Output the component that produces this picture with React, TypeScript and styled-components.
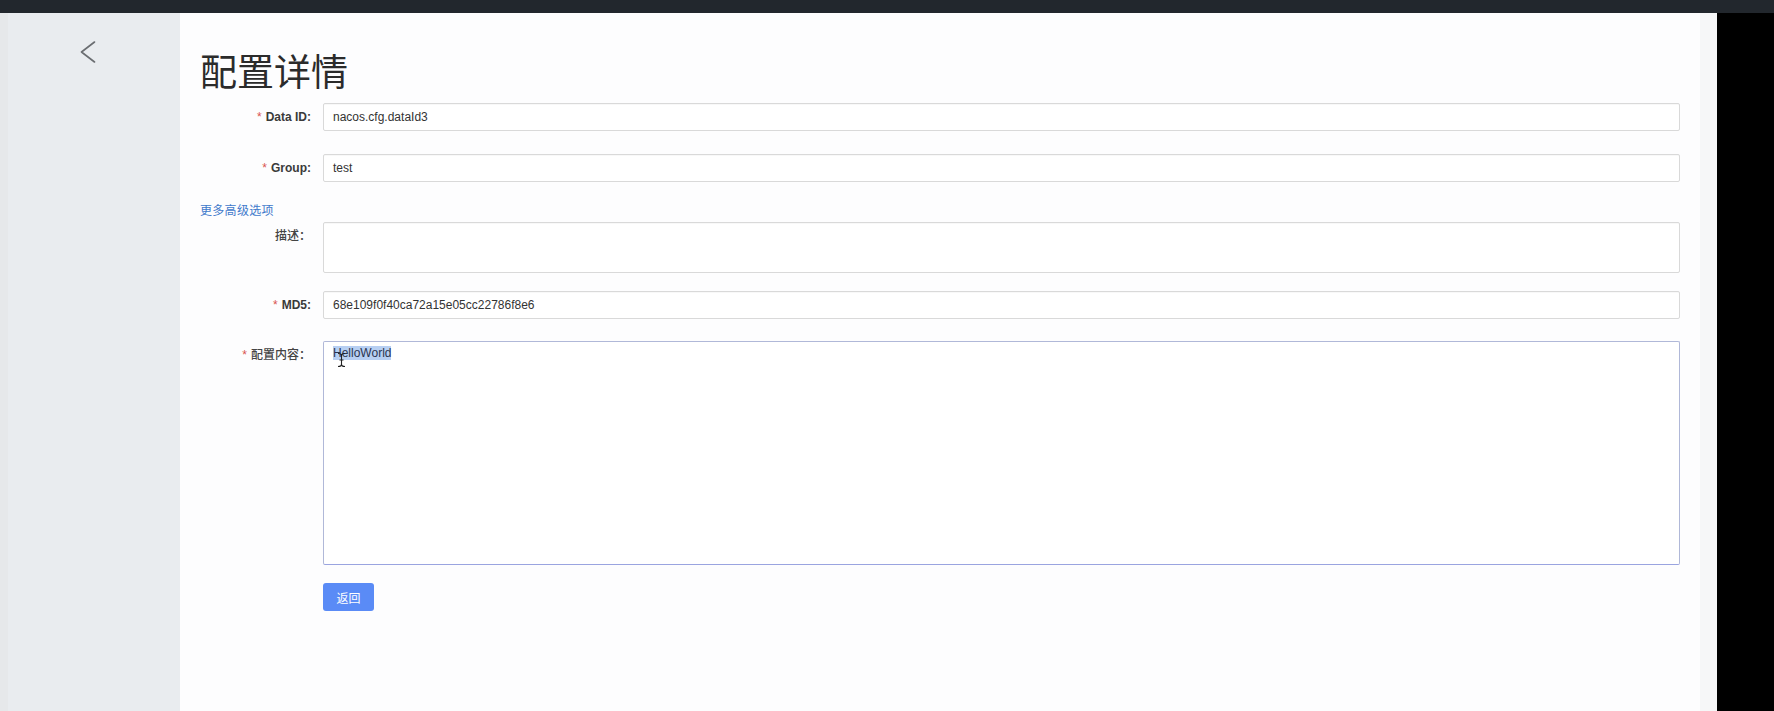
import React from 'react';
import styled, { createGlobalStyle } from 'styled-components';

const GlobalStyle = createGlobalStyle`
  html, body {
    margin: 0;
    padding: 0;
    background: #000;
    overflow: hidden;
  }
  * {
    box-sizing: border-box;
  }
`;

type FieldProps = {
  label: string;
  required?: boolean;
  cjk?: boolean;
  gap: number;
  children: React.ReactNode;
};

function Field({ label, required, cjk, gap, children }: FieldProps) {
  return (
    <StyledField $gap={gap}>
      <StyledLabel $cjk={cjk}>
        {required && <StyledStar>*</StyledStar>}
        {label}
      </StyledLabel>
      <StyledControl>{children}</StyledControl>
    </StyledField>
  );
}

const BackIcon = () => (
  <svg width="16" height="22" viewBox="0 0 16 22" fill="none">
    <polyline points="14.5,1 1.5,11 14.5,21" stroke="#6a6d71" strokeWidth="1.6" strokeLinecap="round" strokeLinejoin="round" />
  </svg>
);

const TextCursor = () => (
  <svg width="9" height="16" viewBox="0 0 9 16" fill="none">
    <path d="M1 1.5 Q4.5 1.5 4.5 3.5 L4.5 12.5 Q4.5 14.5 1 14.5 M8 1.5 Q4.5 1.5 4.5 3.5 M4.5 12.5 Q4.5 14.5 8 14.5 M2.5 8 L6.5 8" stroke="#222" strokeWidth="1.1" />
  </svg>
);

export default function App() {
  return (
    <>
      <GlobalStyle />
      <StyledPage>
        <StyledTopBar />
        <StyledBody>
          <StyledSidebar>
            <StyledBack>
              <BackIcon />
            </StyledBack>
          </StyledSidebar>
          <StyledMain>
            <StyledContent>
              <StyledTitle>配置详情</StyledTitle>
              <Field label="Data ID:" required gap={23}>
                <StyledInput>nacos.cfg.dataId3</StyledInput>
              </Field>
              <Field label="Group:" required gap={19}>
                <StyledInput>test</StyledInput>
              </Field>
              <StyledLink>更多高级选项</StyledLink>
              <Field label="描述：" cjk gap={18}>
                <StyledInput $height={51} />
              </Field>
              <Field label="MD5:" required gap={22}>
                <StyledInput>68e109f0f40ca72a15e05cc22786f8e6</StyledInput>
              </Field>
              <Field label="配置内容：" required cjk gap={18}>
                <StyledEditor>
                  <StyledSelected>HelloWorld</StyledSelected>
                  <StyledCursor>
                    <TextCursor />
                  </StyledCursor>
                </StyledEditor>
              </Field>
              <StyledActions>
                <StyledButton>返回</StyledButton>
              </StyledActions>
            </StyledContent>
            <StyledScrollStrip />
          </StyledMain>
          <StyledOutside />
        </StyledBody>
      </StyledPage>
    </>
  );
}

const StyledPage = styled.div`
  display: flex;
  flex-direction: column;
  height: 711px;
  width: 1774px;
`;

const StyledTopBar = styled.div`
  height: 13px;
  background: #22272d;
  flex-shrink: 0;
`;

const StyledBody = styled.div`
  flex: 1;
  display: flex;
`;

const StyledSidebar = styled.div`
  width: 180px;
  background: linear-gradient(to right, #e6e8ea 0, #e6e8ea 8px, #e9ecef 8px);
  padding: 28px 0 0 80px;
  flex-shrink: 0;
`;

const StyledBack = styled.div`
  width: 16px;
  height: 22px;
`;

const StyledMain = styled.div`
  width: 1537px;
  display: flex;
  background: #fdfdfe;
`;

const StyledContent = styled.div`
  flex: 1;
  padding: 36px 20px 0 20px;
`;

const StyledScrollStrip = styled.div`
  width: 17px;
  background: #f6f7f8;
`;

const StyledOutside = styled.div`
  flex: 1;
  background: #000;
`;

const StyledTitle = styled.h1`
  margin: 0 0 12px;
  font-family: "Noto Sans CJK SC", "Liberation Sans", sans-serif;
  font-weight: 400;
  font-size: 37px;
  line-height: 42px;
  color: #2b2b2b;
`;

const StyledField = styled.div<{ $gap: number }>`
  display: flex;
  align-items: flex-start;
  margin-bottom: ${p => p.$gap}px;
`;

const StyledLabel = styled.div<{ $cjk?: boolean }>`
  width: 123px;
  padding-right: 12px;
  text-align: right;
  line-height: 28px;
  font-family: "Liberation Sans", "Noto Sans CJK SC", sans-serif;
  font-size: 12px;
  font-weight: ${p => (p.$cjk ? 500 : 700)};
  color: ${p => (p.$cjk ? '#444' : '#3a3a3a')};
  white-space: nowrap;
  flex-shrink: 0;
`;

const StyledStar = styled.span`
  color: #d9534f;
  font-weight: 400;
  margin-right: 4px;
`;

const StyledControl = styled.div`
  flex: 1;
`;

const StyledInput = styled.div<{ $height?: number }>`
  height: ${p => p.$height || 28}px;
  border: 1px solid #d9d9d9;
  border-radius: 2px;
  background: #fff;
  box-shadow: inset 0 1px 1px rgba(0, 0, 0, 0.03);
  padding: 0 9px;
  line-height: 26px;
  font-family: "Liberation Sans", sans-serif;
  font-size: 12px;
  color: #333;
`;

const StyledEditor = styled.div`
  position: relative;
  height: 224px;
  border: 1px solid #b0b8d8;
  border-bottom-color: #9aa4e0;
  border-radius: 2px;
  background: #fff;
  padding: 2px 9px;
  line-height: 18px;
  font-family: "Liberation Sans", sans-serif;
  font-size: 12px;
  color: #333;
`;

const StyledSelected = styled.span`
  background: #b7cff2;
  color: #2a3550;
`;

const StyledCursor = styled.div`
  position: absolute;
  left: 13px;
  top: 10px;
  line-height: 0;
`;

const StyledLink = styled.div`
  margin-bottom: 3px;
  font-family: "Noto Sans CJK SC", sans-serif;
  font-size: 12px;
  line-height: 18px;
  letter-spacing: 0.3px;
  color: #3f79cb;
`;

const StyledActions = styled.div`
  padding-left: 123px;
`;

const StyledButton = styled.button`
  width: 51px;
  height: 28px;
  border: none;
  border-radius: 3px;
  background: #5a8bf6;
  color: #fff;
  font-family: "Noto Sans CJK SC", sans-serif;
  font-size: 12px;
  padding: 0;
  cursor: pointer;
`;
